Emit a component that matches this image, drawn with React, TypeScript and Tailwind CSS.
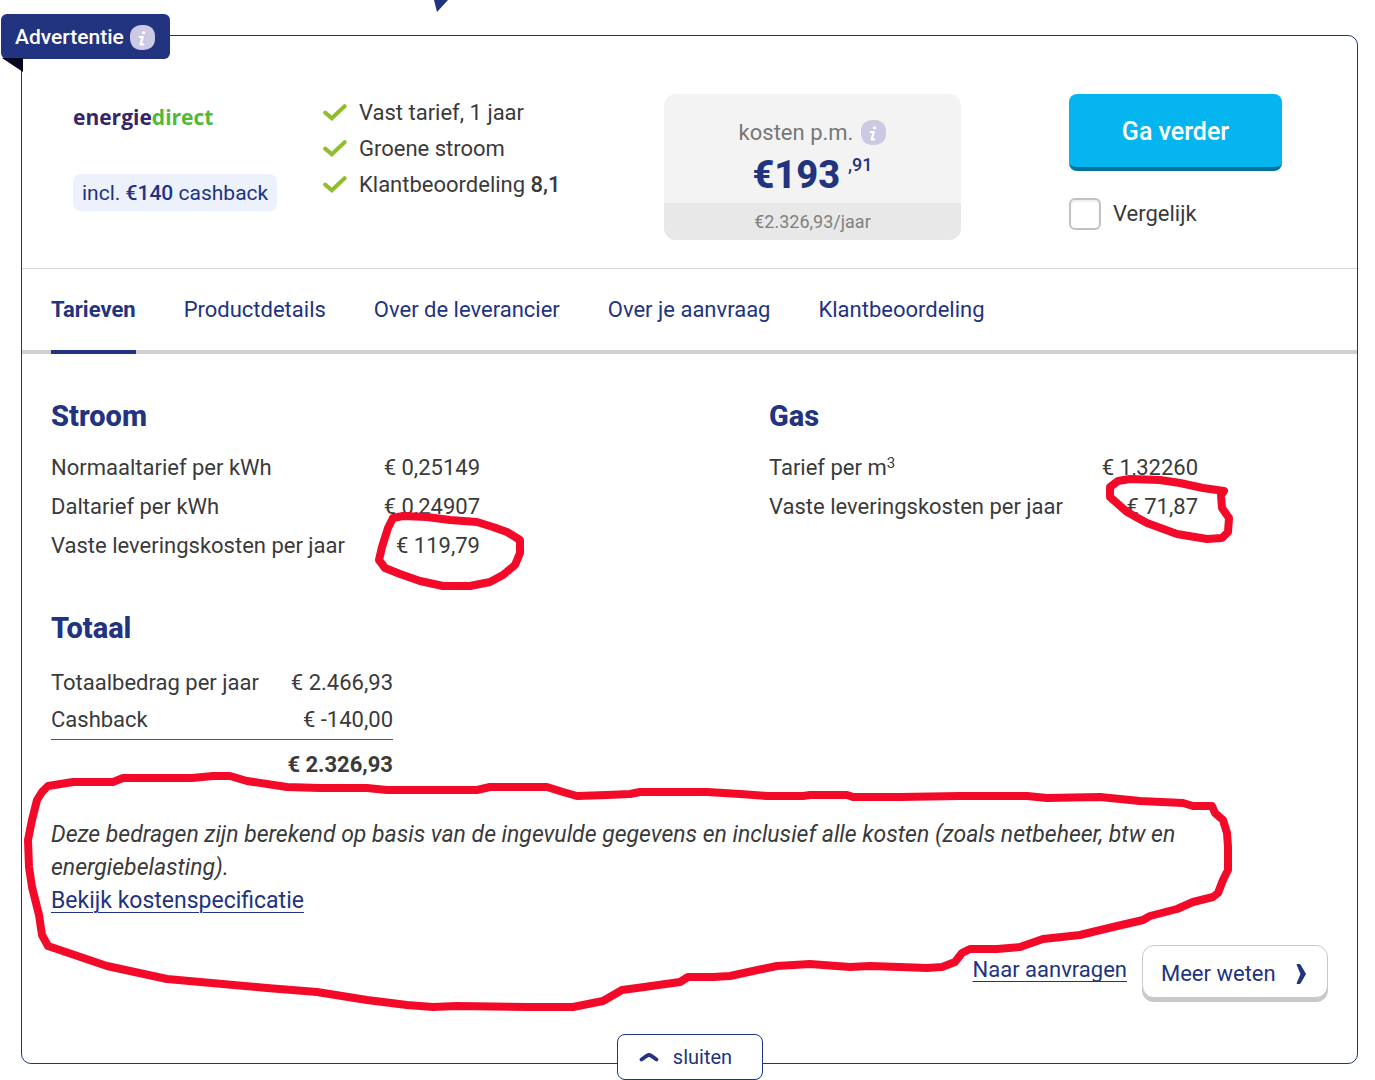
import React from 'react';

const tabs = ['Tarieven', 'Productdetails', 'Over de leverancier', 'Over je aanvraag', 'Klantbeoordeling'];

function InfoIcon() {
  return (
    <svg viewBox="0 0 25 25" className="size-[25px] shrink-0" aria-hidden="true">
      <path
        d="M12 0H14C21 0 25 5 25 11V14C25 21 20 25 13 25H11C4 25 0 20 0 13V11C0 4 5 0 12 0Z"
        fill="#cbc9e3"
      />
      <ellipse cx="13.6" cy="7.8" rx="1.8" ry="1.5" fill="#fff" />
      <path d="M9.8 12H12.8L10.6 19.4H13.2" fill="none" stroke="#fff" strokeWidth="2.2" strokeLinejoin="round" strokeLinecap="round" />
    </svg>
  );
}

function Check() {
  return (
    <svg viewBox="0 0 24 18" className="h-[18px] w-6 shrink-0" aria-hidden="true">
      <path d="M2.2 8.6L8.8 14.2L21.6 2.2" fill="none" stroke="#90bf2b" strokeWidth="4" strokeLinecap="round" />
    </svg>
  );
}

function RateTable({ title, rows }: { title: string; rows: [React.ReactNode, string][] }) {
  return (
    <section>
      <h2 className="text-[29px] leading-9 font-extrabold text-[#22337f]">{title}</h2>
      <table className="mt-3.5 w-[429px]">
        <tbody>
          {rows.map(([label, value]) => (
            <tr key={value} className="h-[39px]">
              <th scope="row" className="p-0 text-left font-normal whitespace-nowrap">{label}</th>
              <td className="p-0 text-right whitespace-nowrap">{value}</td>
            </tr>
          ))}
        </tbody>
      </table>
    </section>
  );
}

function MarkerRings() {
  return (
    <svg
      viewBox="0 0 1375 1080"
      className="pointer-events-none absolute top-0 left-0 h-[1080px] w-[1375px] max-w-none"
      fill="none"
      stroke="#f20a28"
      strokeWidth="8"
      strokeLinejoin="round"
      aria-hidden="true"
    >
      <path d="M393 518L403 516L427 517L450 520L477 522L493 527L507 532L520 540L520 553L515 565L503 575L490 582L470 586L443 586L420 581L400 574L385 568L379 560L382 547L388 528Z" />
      <path d="M1118 481L1130 479L1160 480L1180 483L1203 488L1224 491L1221 495L1222 508L1229 518L1228 532L1222 538L1207 539L1177 534L1147 523L1127 512L1110 497L1110 487Z" />
      <path d="M48 786L73 782L113 782L123 778L192 778L213 776L230 776L247 781L287 787L320 788L367 788L387 790L477 790L490 787L547 787L563 792L577 796L607 795L630 794L640 792L707 792L740 794L767 796L803 796L810 795L847 795L853 797L900 797L960 796L1027 796L1047 798L1100 797L1140 801L1183 803L1193 806L1212 806L1215 813L1223 820L1227 833L1228 847L1228 870L1223 880L1218 893L1213 897L1193 902L1177 909L1150 916L1143 920L1113 927L1080 935L1043 939L1020 947L997 949L970 949L962 953L955 962L942 967L927 968L900 967L870 966L850 967L810 964L777 966L753 971L730 976L713 977L688 977L680 982L637 988L622 990L603 1001L573 1007L530 1007L457 1006L433 1007L407 1005L367 1000L317 992L267 988L167 979L107 966L48 946L42 935L39 915L32 887L29 867L28 840L32 820L37 800L42 792Z" />
    </svg>
  );
}

export default function App() {
  return (
    <div className="relative overflow-hidden bg-white pt-[35px] pr-[17px] pb-4 pl-[21px] font-[Roboto,sans-serif] text-[22px] leading-[33px] text-[#3a3a3a]">
      <svg viewBox="0 0 16 12" className="absolute top-0 left-[433px] h-3 w-4" aria-hidden="true">
        <path d="M1 0H15L4 12Z" fill="#22337f" />
      </svg>

      <main className="relative rounded-[10px] border border-[#22337f]">
        <div className="absolute -top-[22px] -left-[21px]">
          <div className="flex h-[45px] w-[169px] items-center gap-1.5 rounded-md bg-[#22337f] pt-0.5 pl-3.5 text-[21px] font-medium text-white">
            Advertentie
            <InfoIcon />
          </div>
          <svg viewBox="0 0 22 14" className="-mt-px h-3.5 w-[22px]" aria-hidden="true">
            <path d="M1 0H22V14Z" fill="#05061f" />
          </svg>
        </div>

        <header className="grid h-[232px] grid-cols-[250fr_341fr_405fr_213fr] pt-[58px] pr-[75px] pl-[51px]">
          <div className="flex flex-col items-start">
            <div className="mt-1 h-[38px] font-['Open_Sans',sans-serif] text-[21px] leading-[38px] font-bold whitespace-nowrap text-[#35256b]">
              energie<span className="text-[#52b93a]">direct</span>
            </div>
            <div className="mt-[38px] rounded-lg bg-[#edf1fb] px-[9px] pt-px text-[21px] leading-9 whitespace-nowrap text-[#22337f]">
              incl. <span className="font-medium">€140</span> cashback
            </div>
          </div>

          <ul className="pt-px leading-9 whitespace-nowrap">
            <li className="flex items-center gap-3"><Check />Vast tarief, 1 jaar</li>
            <li className="flex items-center gap-3"><Check />Groene stroom</li>
            <li className="flex items-center gap-3">
              <Check />
              <span>Klantbeoordeling <strong className="font-medium">8,1</strong></span>
            </li>
          </ul>

          <div className="h-[146px] w-[297px] overflow-hidden rounded-xl bg-[#f3f3f3] text-center">
            <div className="h-[109px] pt-[22px]">
              <div className="flex items-center justify-center gap-2 text-[#777]">
                kosten p.m.
                <InfoIcon />
              </div>
              <div className="flex items-start justify-center gap-2 text-[#22337f]">
                <strong className="text-[38px] leading-[52px] font-extrabold">€193</strong>
                <span className="text-lg leading-8 font-medium">,91</span>
              </div>
            </div>
            <div className="h-[37px] bg-[#e8e8e8] text-lg leading-[37px] text-[#808080]">€2.326,93/jaar</div>
          </div>

          <div>
            <button className="h-[77px] w-full rounded-lg border-b-4 border-[#04729a] bg-[#04b5ef] pt-0.5 text-[25px] font-medium text-white">
              Ga verder
            </button>
            <label className="mt-[26px] flex items-center gap-3">
              <input
                type="checkbox"
                className="size-8 appearance-none rounded-md border-2 border-[#c2c2c2] bg-white shadow-[inset_0_2px_2px_#eeeeee]"
              />
              Vergelijk
            </label>
          </div>
        </header>

        <nav className="flex gap-12 border-t border-b-4 border-t-[#d5d5d5] border-b-[#d0d0d0] pl-[29px] whitespace-nowrap text-[#22337f]">
          {tabs.map((tab, i) => (
            <a
              key={tab}
              href="#"
              className={i === 0 ? '-mb-1 border-b-4 border-[#22337f] py-6 font-bold' : 'py-6'}
            >
              {tab}
            </a>
          ))}
        </nav>

        <div className="px-[29px] pt-11 pb-[61px]">
          <div className="grid grid-cols-[718fr_559fr]">
            <RateTable
              title="Stroom"
              rows={[
                ['Normaaltarief per kWh', '€ 0,25149'],
                ['Daltarief per kWh', '€ 0,24907'],
                ['Vaste leveringskosten per jaar', '€ 119,79'],
              ]}
            />
            <RateTable
              title="Gas"
              rows={[
                [<>Tarief per m<sup className="text-[15px]">3</sup></>, '€ 1,32260'],
                ['Vaste leveringskosten per jaar', '€ 71,87'],
              ]}
            />
          </div>

          <h2 className="mt-[45px] text-[29px] leading-9 font-extrabold text-[#22337f]">Totaal</h2>
          <table className="mt-[17px] w-[342px]">
            <tbody>
              <tr className="h-[38px]">
                <th scope="row" className="p-0 text-left font-normal">Totaalbedrag per jaar</th>
                <td className="p-0 text-right whitespace-nowrap">€ 2.466,93</td>
              </tr>
              <tr className="h-[38px] border-b border-[#555]">
                <th scope="row" className="p-0 text-left font-normal">Cashback</th>
                <td className="p-0 text-right">€ -140,00</td>
              </tr>
              <tr className="h-[50px] font-bold">
                <td colSpan={2} className="p-0 text-right">€ 2.326,93</td>
              </tr>
            </tbody>
          </table>

          <div className="mt-[29px] text-[23px]">
            <p className="max-w-[1150px] italic">
              Deze bedragen zijn berekend op basis van de ingevulde gegevens en inclusief alle kosten (zoals netbeheer, btw en
              energiebelasting).
            </p>
            <a href="#" className="block w-fit text-[#22337f] underline decoration-1 underline-offset-4">
              Bekijk kostenspecificatie
            </a>
          </div>

          <div className="mt-7 flex items-start justify-end gap-[15px] text-[#22337f]">
            <a href="#" className="mt-2 underline decoration-1 underline-offset-4">Naar aanvragen</a>
            <button className="mb-1 flex h-[53px] w-[186px] items-center justify-between rounded-xl border border-[#c8c8c8] bg-white pt-1 pr-5 pl-[18px] shadow-[0_4px_0_#c8c8c8]">
              Meer weten
              <svg viewBox="0 0 12 20" className="h-5 w-3" aria-hidden="true">
                <path d="M2 0.5H5L10.5 10L5 19.5H2L6 10Z" fill="#22337f" stroke="#22337f" strokeLinejoin="round" />
              </svg>
            </button>
          </div>
        </div>

        <div className="absolute inset-x-0 -bottom-[17px] flex justify-center">
          <button className="flex h-[46px] w-[146px] items-center justify-center gap-3.5 rounded-lg border border-[#22337f] bg-white pr-2 text-xl text-[#22337f]">
            <svg viewBox="0 0 20 10" className="h-2.5 w-5" aria-hidden="true">
              <path d="M2.5 7.5L8 3.6Q10 2.4 12 3.6L17.500 7.5" fill="none" stroke="#22337f" strokeWidth="3.8" strokeLinecap="round" />
            </svg>
            sluiten
          </button>
        </div>
      </main>

      <MarkerRings />
    </div>
  );
}
